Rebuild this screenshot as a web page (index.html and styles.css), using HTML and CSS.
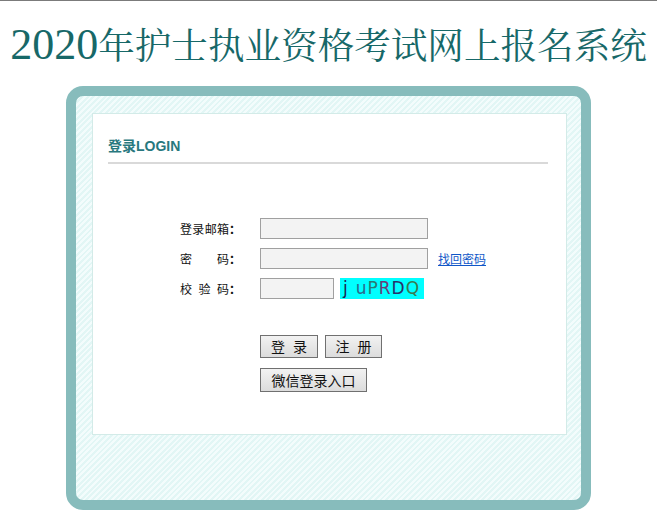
FILE: index.html
```html
<!DOCTYPE html>
<html lang="zh-CN">
<head>
<meta charset="utf-8">
<title>2020年护士执业资格考试网上报名系统</title>
<link rel="stylesheet" href="styles.css">
</head>
<body>
<div class="topline"></div>
<h1 class="title"><span class="num">2020</span>年护士执业资格考试网上报名系统</h1>
<div class="frame">
  <div class="panel">
    <h2 class="panel-title">登录LOGIN</h2>
    <form class="login-form">
      <label class="lbl"><span class="lbl-text"><span>登</span><span>录</span><span>邮</span><span>箱</span></span><span class="colon">：</span></label>
      <div class="field"><input class="inp" type="text"></div>

      <label class="lbl"><span class="lbl-text"><span>密</span><span>码</span></span><span class="colon">：</span></label>
      <div class="field"><input class="inp" type="password"><a class="link" href="#">找回密码</a></div>

      <label class="lbl"><span class="lbl-text"><span>校</span><span>验</span><span>码</span></span><span class="colon">：</span></label>
      <div class="field"><input class="inp inp-short" type="text"><span class="captcha"><span class="c1">j</span><span class="c2">u</span><span class="c3">P</span><span class="c4">R</span><span class="c5">D</span><span class="c6">Q</span></span></div>

      <div class="actions">
        <div class="btn-row">
          <button class="btn btn-login btn-spaced" type="button">登 录</button>
          <button class="btn btn-reg btn-spaced" type="button">注 册</button>
        </div>
        <div class="btn-row">
          <button class="btn btn-wx" type="button">微信登录入口</button>
        </div>
      </div>
    </form>
  </div>
</div>
</body>
</html>
```
FILE: styles.css
```css
html, body {
  margin: 0;
  padding: 0;
  background: #ffffff;
}
body {
  font-family: "Liberation Sans", "Noto Sans CJK SC", sans-serif;
  font-size: 12px;
  color: #222;
}
.topline {
  height: 0;
  border-top: 1px solid #7b7b7b;
}
.title {
  margin: 0;
  padding-top: 23px;
  height: 64px;
  line-height: 42px;
  box-sizing: border-box;
  font-family: "Liberation Serif", "Noto Serif CJK SC", "Noto Sans CJK SC", serif;
  font-size: 36.6px;
  font-weight: normal;
  color: #176868;
  text-align: center;
  white-space: nowrap;
}
.title .num {
  font-size: 44px;
}
.frame {
  box-sizing: border-box;
  width: 525px;
  margin: 21px auto 0;
  border: 10px solid #87bcbc;
  border-radius: 17px;
  padding: 17px 14px 65px 16px;
  background-color: #e4f7f6;
  background-image: repeating-linear-gradient(135deg, #e2f6f5 0 2px, #f3fcfc 2px 4px);
}
.panel {
  background: #fff;
  border: 1px solid #d3ebe8;
  padding: 0 18px 45px 15px;
}
.panel-title {
  margin: 22px 0 0;
  padding-bottom: 6px;
  line-height: 20px;
  font-size: 14px;
  font-weight: bold;
  color: #28787e;
  border-bottom: 2px solid #d9d9d9;
  font-family: "Liberation Sans", "Noto Sans CJK SC", sans-serif;
}
.login-form {
  margin: 54px 0 0 72px;
  display: grid;
  grid-template-columns: 80px auto;
  grid-auto-rows: 21px;
  row-gap: 9px;
}
.lbl {
  display: flex;
  align-items: center;
  font-size: 12px;
  color: #111;
  font-family: "Noto Sans CJK SC", sans-serif;
}
.lbl-text {
  display: flex;
  justify-content: space-between;
  width: 49px;
}
.colon {
  width: 12px;
  font-weight: bold;
}
.field {
  display: flex;
  align-items: center;
}
.inp {
  box-sizing: border-box;
  width: 168px;
  height: 21px;
  margin: 0;
  padding: 0 3px;
  border: 1px solid #a0a0a0;
  background: #f3f3f3;
  font-size: 12px;
}
.inp-short {
  width: 74px;
}
.link {
  margin-left: 10px;
  font-size: 12px;
  color: #1057c8;
  text-decoration: underline;
  font-family: "Noto Sans CJK SC", sans-serif;
}
.captcha {
  margin-left: 6px;
  width: 84px;
  height: 21px;
  box-sizing: border-box;
  padding-left: 3px;
  background: #00ffff;
  display: flex;
  align-items: center;
  font-family: "DejaVu Sans", sans-serif;
  font-size: 17px;
  line-height: 21px;
}
.captcha span { display: inline-block; }
.c1 { color: #1a2450; margin-right: 8px; }
.c2 { color: #2a6a8c; margin-right: 1px; }
.c3 { color: #2a7a74; margin-right: 1px; }
.c4 { color: #6a3a78; margin-right: 1px; }
.c5 { color: #28306a; margin-right: 1px; }
.c6 { color: #3a7a4e; }
.actions {
  grid-column: 2;
  grid-row: span 3;
  padding-top: 27px;
  display: flex;
  flex-direction: column;
  gap: 10px;
}
.btn-row {
  display: flex;
  gap: 7px;
}
.btn {
  margin: 0;
  padding: 0;
  height: 23px;
  border: 1px solid #707070;
  background: linear-gradient(#f2f2f2, #dcdcdc);
  font-family: "Noto Sans CJK SC", sans-serif;
  font-size: 14px;
  line-height: 21px;
  color: #111;
}
.btn-spaced { word-spacing: 5px; }
.btn-login { width: 58px; }
.btn-reg { width: 57px; }
.btn-wx { width: 107px; height: 24px; }
```
